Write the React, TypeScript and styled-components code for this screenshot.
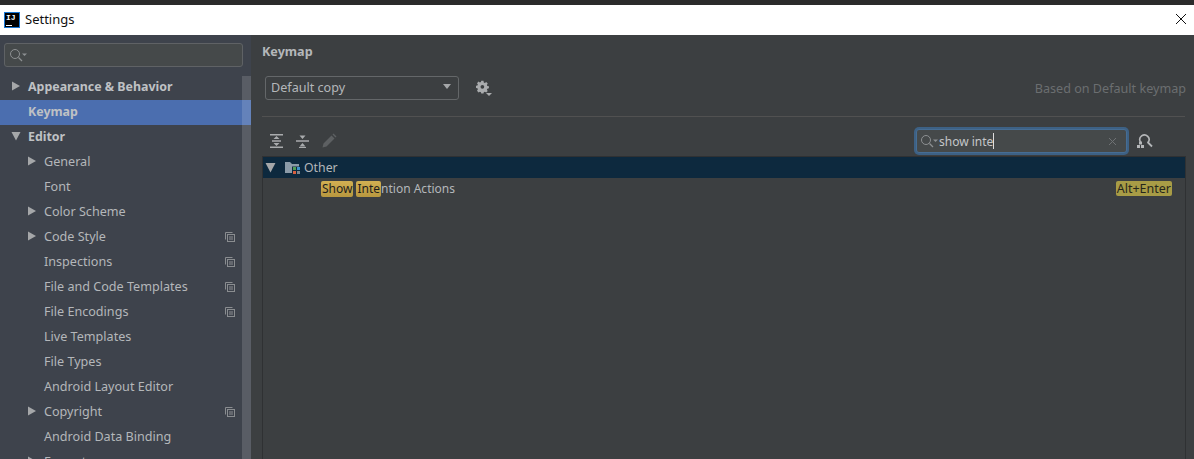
import React from "react";
import styled, { createGlobalStyle } from "styled-components";

const Global = createGlobalStyle`
  html, body { margin: 0; padding: 0; height: 100%; background: #3c3f41; overflow: hidden; }
  #root { height: 459px; }
  * { box-sizing: border-box; }
`;

const Page = styled.div`
  width: 1194px; height: 459px; display: flex; flex-direction: column; overflow: hidden;
  font-family: "Noto Sans", "Open Sans", sans-serif; font-size: 12.6px; color: #bbbbbb;
`;
const TopStrip = styled.div`height: 5px; background: #2b2b2b; flex: none;`;
const TitleBar = styled.div`
  height: 30px; flex: none; background: #fff; display: flex; align-items: center; padding: 0 7px 2px 4px; color: #111;
`;
const Logo = styled.div`
  width: 16px; height: 16px; margin-top: 2px; background: #000; box-shadow: 0 0 0 1px #1976d2 inset; color: #fff; font: bold 8px/9px "Liberation Mono", monospace;
  padding: 1px 0 0 2px; position: relative; flex: none;
  &::after { content: ""; position: absolute; left: 2px; bottom: 2px; width: 6px; height: 1px; background: #fff; }
`;
const TitleText = styled.span`margin-left: 5px; font-size: 13px; flex: 1;`;
const Body = styled.div`flex: 1; display: flex; min-height: 0;`;
const Sidebar = styled.div`
  width: 251px; flex: none; background: #3e434c; position: relative; overflow: hidden; padding-top: 8px;
`;
const Scrollbar = styled.div`position: absolute; right: 0; top: 41px; bottom: 0; width: 9px; background: rgba(255, 255, 255, 0.14);`;
const SideSearch = styled.div`
  margin-left: 4px; width: 239px; height: 24px; background: #45494a; border: 1px solid #5f6265; border-radius: 3px;
  display: flex; align-items: center; padding-left: 4px; margin-bottom: 8px;
`;
const Row = styled.div<{ $selected?: boolean; $bold?: boolean; $indent: number }>`
  height: 25px; display: flex; align-items: center; position: relative; flex: none;
  padding: 0 0 2px ${p => p.$indent}px;
  background: ${p => (p.$selected ? "#4b6eaf" : "transparent")};
  font-weight: ${p => (p.$bold ? 700 : 400)};
  font-size: ${p => (p.$bold ? "12.4px" : "12.6px")};
  color: ${p => (p.$bold ? "#bfc1c4" : "#b4b7ba")};
`;
const Caret = styled.span<{ $left: number }>`position: absolute; left: ${p => p.$left}px; top: 6px; display: flex;`;
const CopyMark = styled.span`position: absolute; left: 225px; top: 7px; display: flex;`;
const Main = styled.div`flex: 1; background: #3c3f41; padding: 0 8px 0 11px; display: flex; flex-direction: column; min-width: 0;`;
const Heading = styled.div`font-weight: 700; height: 17px; margin-top: 8px; line-height: 17px; color: #b4b7ba;`;
const SchemeBar = styled.div`display: flex; align-items: center; height: 24px; margin: 16px 0 0 3px;`;
const Select = styled.div`
  width: 194px; height: 24px; background: #3c3f41; border: 1px solid #646769; border-radius: 3px; display: flex; align-items: center;
  justify-content: space-between; padding: 0 6px 2px 5px; color: #b4b7ba;
`;
const Gear = styled.span`margin-left: 17px; display: flex;`;
const Based = styled.span`margin-left: auto; color: #6b6e70;`;
const Divider = styled.div`height: 1px; background: #515151; margin: 16px 1px 0 0;`;
const ToolBar = styled.div`height: 39px; display: flex; align-items: center; padding: 9px 0 0 7px; flex: none;`;
const ToolIcon = styled.span`display: flex; margin-right: 10px;`;
const SearchBox = styled.div`
  margin-left: auto; width: 211px; height: 24px; background: #45494a; border: 1px solid #466d94; border-radius: 3px;
  box-shadow: 0 0 0 2px #3d6185; display: flex; align-items: center; padding: 0 9px 0 3px; color: #c4c6c8; font-size: 12px;
`;
const Caretline = styled.span`display: inline-block; width: 1px; height: 16px; background: #ddd; vertical-align: -3px;`;
const SearchValue = styled.span`flex: 1; margin-left: 0; white-space: pre;`;
const FindShortcut = styled.span`display: flex; margin: 0 33px 0 9px;`;
const Tree = styled.div`flex: 1; border: 1px solid #2f3133; border-bottom: 0; display: flex; flex-direction: column; width: 924px;`;
const GroupRow = styled.div`height: 21px; background: #0d293e; display: flex; align-items: center; padding: 0 0 1px 2px; color: #b4b7ba; flex: none; font-size: 12.3px;`;
const GroupLabel = styled.span`margin-left: 3px;`;
const ActionRow = styled.div`height: 21px; display: flex; align-items: center; padding: 0 13px 0 58px; color: #b4b7ba; flex: none; white-space: pre; font-size: 12px;`;
const Mark = styled.span`
  background: linear-gradient(#d2b052, #b8983f); color: #1d1d1d; border-radius: 2px; padding: 0 1px; margin-right: 3px; height: 16px; line-height: 16px; display: inline-block;
`;
const MarkTail = styled(Mark)`margin-right: 0;`;
const Shortcut = styled.span`
  margin-left: auto; background: #a89c46; color: #26261c; border-radius: 2px; height: 15px; line-height: 15px; padding: 0 1px; font-size: 12.5px;
`;

const Tri = ({ down, size = 10 }: { down?: boolean; size?: number }) => (
  <svg width={size} height={size} viewBox="0 0 10 10">
    <path d={down ? "M0.5 1h9L5 9.5z" : "M1 0.5v9L9 5z"} fill="#a5a7a9" />
  </svg>
);
const SearchGlyph = () => (
  <svg width="19" height="14" viewBox="0 0 19 14" fill="none">
    <circle cx="6" cy="6" r="4.5" stroke="#8d9092" strokeWidth="1" />
    <path d="M9.5 9.5L13 13" stroke="#8d9092" strokeWidth="1.3" />
    <path d="M13 5.5h5l-2.5 2.5z" fill="#8d9092" />
  </svg>
);
const Copy = () => (
  <svg width="10" height="10" viewBox="0 0 10 10" fill="none" stroke="#8a8d90">
    <path d="M0.5 7.5v-7h7" />
    <rect x="2.5" y="2.5" width="7" height="7" />
    <path d="M4 5h4M4 7h4" />
  </svg>
);

const items: { label: string; indent: number; bold?: boolean; selected?: boolean; caret?: number; down?: boolean; copy?: boolean }[] = [
  { label: "Appearance & Behavior", indent: 28, bold: true, caret: 11 },
  { label: "Keymap", indent: 28, bold: true, selected: true },
  { label: "Editor", indent: 28, bold: true, caret: 11, down: true },
  { label: "General", indent: 44, caret: 27 },
  { label: "Font", indent: 44 },
  { label: "Color Scheme", indent: 44, caret: 27 },
  { label: "Code Style", indent: 44, caret: 27, copy: true },
  { label: "Inspections", indent: 44, copy: true },
  { label: "File and Code Templates", indent: 44, copy: true },
  { label: "File Encodings", indent: 44, copy: true },
  { label: "Live Templates", indent: 44 },
  { label: "File Types", indent: 44 },
  { label: "Android Layout Editor", indent: 44 },
  { label: "Copyright", indent: 44, caret: 27, copy: true },
  { label: "Android Data Binding", indent: 44 },
  { label: "Emmet", indent: 44, caret: 27 },
];

export default function App() {
  return (
    <Page>
      <Global />
      <TopStrip />
      <TitleBar>
        <Logo>IJ</Logo>
        <TitleText>Settings</TitleText>
        <svg width="12" height="12" viewBox="0 0 12 12" stroke="#111" strokeWidth="1"><path d="M1 1l10 10M11 1L1 11" /></svg>
      </TitleBar>
      <Body>
        <Sidebar>
          <SideSearch><SearchGlyph /></SideSearch>
          {items.map(i => (
            <Row key={i.label} $indent={i.indent} $bold={i.bold} $selected={i.selected}>
              {i.caret !== undefined && <Caret $left={i.caret}><Tri down={i.down} /></Caret>}
              {i.label}
              {i.copy && <CopyMark><Copy /></CopyMark>}
            </Row>
          ))}
          <Scrollbar />
        </Sidebar>
        <Main>
          <Heading>Keymap</Heading>
          <SchemeBar>
            <Select>
              Default copy
              <svg width="10" height="6" viewBox="0 0 10 6"><path d="M1 0h8L5 5z" fill="#a5a7a9" /></svg>
            </Select>
            <Gear>
              <svg width="16" height="16" viewBox="0 0 16 16">
                <path fillRule="evenodd" fill="#a9abad" d="M6.2 1h2.6l.4 1.9 1.2.5 1.6-1 1.8 1.8-1 1.6.5 1.2 1.9.4v2.4l-1.9.4-.5 1.2 1 1.6-1.8 1.8-1.6-1-1.2.5-.4 1.7H6.2l-.4-1.7-1.2-.5-1.6 1L1.2 12.5l1-1.6-.5-1.2L0 9.3V6.9l1.7-.4.5-1.2-1-1.6L3 1.9l1.6 1 1.2-.5zM7.5 5.8a2.2 2.2 0 1 0 0 4.4 2.2 2.2 0 0 0 0-4.4z" transform="scale(.85)" />
                <path d="M10 13h6l-3 3z" fill="#a9abad" />
              </svg>
            </Gear>
            <Based>Based on Default keymap</Based>
          </SchemeBar>
          <Divider />
          <ToolBar>
            <ToolIcon>
              <svg width="16" height="16" viewBox="0 0 16 16" fill="#a9abad">
                <path d="M1 1h13v1.5H1zM1 13.5h13V15H1zM3 7.3h9v1.4H3zM7.5 3l3 3h-6zM7.5 13l-3-3h6z" />
              </svg>
            </ToolIcon>
            <ToolIcon>
              <svg width="16" height="16" viewBox="0 0 16 16" fill="#a9abad">
                <path d="M1 7.3h13v1.4H1zM7.5 6L4.5 2.5h6zM7.5 10l3 3.5h-6zM4 14h7v1H4z" />
              </svg>
            </ToolIcon>
            <ToolIcon>
              <svg width="16" height="16" viewBox="0 0 16 16" fill="#5d6062">
                <path d="M1.5 14.5l1-4L10.5 2.5l3 3L5.5 13.5zM11.5 1.5l1-1 3 3-1 1z" />
              </svg>
            </ToolIcon>
            <SearchBox>
              <SearchGlyph />
              <SearchValue>show inte<Caretline /></SearchValue>
              <svg width="9" height="9" viewBox="0 0 9 9" stroke="#6f7274" strokeWidth="1"><path d="M1 1l7 7M8 1L1 8" /></svg>
            </SearchBox>
            <FindShortcut>
              <svg width="17" height="16" viewBox="0 0 17 16" fill="none">
                <path d="M4.5 9A4.6 4.6 0 1 1 12 9.5" stroke="#b4b6b8" strokeWidth="1.6" />
                <path d="M11.5 9l4.5 4.5" stroke="#b4b6b8" strokeWidth="1.8" />
                <path d="M1 12h3v3H1zM5 12h3v3H5zM3 8.5h3v3H3z" fill="#b4b6b8" />
              </svg>
            </FindShortcut>
          </ToolBar>
          <Tree>
            <GroupRow>
              <Tri down size={11} />
              <svg style={{ marginLeft: 8 }} width="17" height="15" viewBox="0 0 17 15">
                <path d="M1 2h5l2 2h7v9H1z" fill="#8b9ba8" />
                <rect x="8" y="6.5" width="9" height="9" fill="#0d293e" />
                <rect x="9" y="7" width="3" height="3" fill="#4f9e58" />
                <rect x="13" y="7" width="3" height="3" fill="#3b92c9" />
                <rect x="9" y="11" width="3" height="3" fill="#d9603f" />
                <rect x="13" y="11" width="3" height="3" fill="#7c8791" />
              </svg>
              <GroupLabel>Other</GroupLabel>
            </GroupRow>
            <ActionRow>
              <Mark>Show</Mark><MarkTail>Inte</MarkTail>ntion Actions
              <Shortcut>Alt+Enter</Shortcut>
            </ActionRow>
          </Tree>
        </Main>
      </Body>
    </Page>
  );
}
